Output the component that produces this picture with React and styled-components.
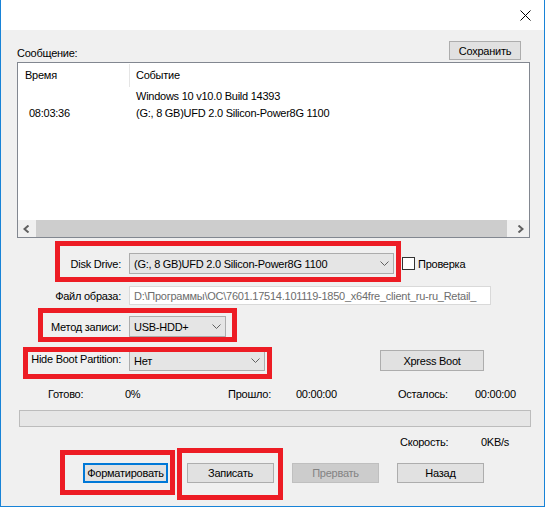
import React from 'react';
import styled, { createGlobalStyle } from 'styled-components';

const GlobalStyle = createGlobalStyle`
  html, body {
    margin: 0;
    padding: 0;
    background: #fff;
  }
  body {
    font-family: "Liberation Sans", Arial, sans-serif;
    font-size: 11px;
    letter-spacing: -0.25px;
    color: #000;
  }
  * {
    box-sizing: border-box;
  }
`;

const Window = styled.div`
  width: 545px;
  height: 507px;
  border: 1px solid #1883d7;
  border-top: none;
  background: #f0f0f0;
  display: flex;
  flex-direction: column;
`;

const TitleBar = styled.div`
  height: 30px;
  background: #fff;
  display: flex;
  justify-content: flex-end;
  align-items: center;
`;

const CloseButton = styled.div`
  width: 37px;
  height: 30px;
  display: flex;
  align-items: center;
  justify-content: center;
`;

const Body = styled.div`
  padding: 11px 0 0 16px;
  display: flex;
  flex-direction: column;
`;

const HeaderRow = styled.div`
  width: 504px;
  height: 19px;
  display: flex;
  justify-content: space-between;
  align-items: flex-end;
`;

const Caption = styled.span`
  line-height: 13px;
`;

const Button = styled.button`
  width: ${(p) => p.w}px;
  height: ${(p) => p.h || 20}px;
  padding: 0;
  font: inherit;
  letter-spacing: inherit;
  color: #000;
  background: #e1e1e1;
  border: ${(p) => (p.primary ? '2px solid #0078d7' : '1px solid #adadad')};
  flex-shrink: 0;
  margin-left: ${(p) => p.ml || 0}px;

  &:disabled {
    background: #cccccc;
    border-color: #bfbfbf;
    color: #838383;
  }
`;

const ListBox = styled.div`
  margin-top: 2px;
  width: 513px;
  height: 176px;
  border: 1px solid #828790;
  background: #fff;
  display: flex;
  flex-direction: column;
`;

const ListLine = styled.div`
  display: grid;
  grid-template-columns: 112px 1fr;
  height: ${(p) => p.h}px;
  line-height: ${(p) => p.h}px;
`;

const HeadCell = styled.div`
  position: relative;
  padding-left: ${(p) => p.pad}px;

  ${(p) =>
    p.divider &&
    `&::after {
      content: '';
      position: absolute;
      right: 0;
      top: 1px;
      bottom: 1px;
      width: 1px;
      background: #e5e5e5;
    }`}
`;

const Cell = styled.div`
  padding-left: ${(p) => p.pad}px;
  white-space: nowrap;
`;

const Filler = styled.div`
  flex: 1;
`;

const HScroll = styled.div`
  height: 17px;
  display: flex;
  background: #f0f0f0;
`;

const ScrollArrow = styled.div`
  width: 17px;
  display: flex;
  align-items: center;
  justify-content: center;
`;

const Thumb = styled.div`
  flex: 1;
  margin: 0 5px 0 1px;
  background: #cdcdcd;
`;

const FieldRow = styled.div`
  position: relative;
  display: flex;
  align-items: center;
  height: ${(p) => p.h}px;
  margin-top: ${(p) => p.mt}px;
`;

const Label = styled.div`
  width: 104px;
  margin-right: 8px;
  text-align: right;
  white-space: nowrap;
  flex-shrink: 0;
  margin-top: ${(p) => p.lift || 0}px;
`;

const Combo = styled.div`
  width: ${(p) => p.w}px;
  height: 21px;
  background: #e5e5e5;
  border: 1px solid #acacac;
  display: flex;
  align-items: center;
  justify-content: space-between;
  padding: 0 4px 0 4px;
  white-space: nowrap;
  flex-shrink: 0;
`;

const TextField = styled.div`
  width: 362px;
  height: 19px;
  background: #fff;
  border: 1px solid #d9d9d9;
  color: #6d6d6d;
  padding-left: 4px;
  display: flex;
  align-items: center;
  white-space: nowrap;
  overflow: hidden;
`;

const CheckBox = styled.div`
  width: 13px;
  height: 13px;
  margin-left: 8px;
  border: 1px solid #333;
  background: #fff;
  flex-shrink: 0;
`;

const CheckLabel = styled.span`
  margin-left: 3px;
`;

const Highlight = styled.div`
  position: absolute;
  left: ${(p) => p.x}px;
  top: ${(p) => p.y}px;
  width: ${(p) => p.w}px;
  height: ${(p) => p.h}px;
  border: 5px solid #ed1c24;
  pointer-events: none;
`;

const InfoRow = styled.div`
  display: flex;
  line-height: 14px;
  margin-top: ${(p) => p.mt}px;
  padding-left: ${(p) => p.pl}px;
  white-space: nowrap;
`;

const Stat = styled.span`
  width: ${(p) => (p.w ? `${p.w}px` : 'auto')};
  flex-shrink: 0;
`;

const Progress = styled.div`
  margin: 9px 0 0 2px;
  width: 512px;
  height: 17px;
  background: #e6e6e6;
  border: 1px solid #bcbcbc;
`;

const ButtonRow = styled.div`
  position: relative;
  display: flex;
  margin-top: 14px;
  padding-left: 66px;
`;

const Chevron = () => (
  <svg width="9" height="5" viewBox="0 0 9 5">
    <path d="M0.5 0.5 L4.5 4.5 L8.5 0.5" fill="none" stroke="#606060" strokeWidth="1" />
  </svg>
);

const Arrow = ({ dir }) => (
  <svg width="7" height="8" viewBox="0 0 7 8">
    <path
      d={dir === 'left' ? 'M5.5 0.5 L1.5 4 L5.5 7.5' : 'M1.5 0.5 L5.5 4 L1.5 7.5'}
      fill="none"
      stroke="#606060"
      strokeWidth="2"
    />
  </svg>
);

const App = () => {
  return (
    <>
      <GlobalStyle />
      <Window>
        <TitleBar>
          <CloseButton>
            <svg width="11" height="11" viewBox="0 0 11 11">
              <path d="M0.5 0.5 L10.5 10.5 M10.5 0.5 L0.5 10.5" stroke="#000" strokeWidth="1" />
            </svg>
          </CloseButton>
        </TitleBar>
        <Body>
          <HeaderRow>
            <Caption>Сообщение:</Caption>
            <Button w={72} h={19}>Сохранить</Button>
          </HeaderRow>

          <ListBox>
            <ListLine h={25}>
              <HeadCell pad={7} divider>Время</HeadCell>
              <HeadCell pad={6}>Событие</HeadCell>
            </ListLine>
            <ListLine h={17}>
              <Cell pad={11}></Cell>
              <Cell pad={6}>Windows 10 v10.0 Build 14393</Cell>
            </ListLine>
            <ListLine h={17}>
              <Cell pad={11}>08:03:36</Cell>
              <Cell pad={6}>(G:, 8 GB)UFD 2.0 Silicon-Power8G 1100</Cell>
            </ListLine>
            <Filler />
            <HScroll>
              <ScrollArrow><Arrow dir="left" /></ScrollArrow>
              <Thumb />
              <ScrollArrow><Arrow dir="right" /></ScrollArrow>
            </HScroll>
          </ListBox>

          <FieldRow h={21} mt={15}>
            <Label>Disk Drive:</Label>
            <Combo w={265}>
              <span>(G:, 8 GB)UFD 2.0 Silicon-Power8G 1100</span>
              <Chevron />
            </Combo>
            <CheckBox />
            <CheckLabel>Проверка</CheckLabel>
            <Highlight x={38} y={-12} w={346} h={41} />
          </FieldRow>

          <FieldRow h={19} mt={12}>
            <Label>Файл образа:</Label>
            <TextField>D:\Программы\ОС\7601.17514.101119-1850_x64fre_client_ru-ru_Retail_</TextField>
          </FieldRow>

          <FieldRow h={21} mt={11}>
            <Label>Метод записи:</Label>
            <Combo w={97}>
              <span>USB-HDD+</span>
              <Chevron />
            </Combo>
            <Highlight x={21} y={-8} w={199} h={34} />
          </FieldRow>

          <FieldRow h={21} mt={13}>
            <Label lift={-3}>Hide Boot Partition:</Label>
            <Combo w={136}>
              <span>Нет</span>
              <Chevron />
            </Combo>
            <Button w={104} h={21} ml={115}>Xpress Boot</Button>
            <Highlight x={6} y={-3} w={249} h={32} />
          </FieldRow>

          <InfoRow mt={16} pl={31}>
            <Stat w={77}>Готово:</Stat>
            <Stat w={103}>0%</Stat>
            <Stat w={68}>Прошло:</Stat>
            <Stat w={102}>00:00:00</Stat>
            <Stat w={77}>Осталось:</Stat>
            <Stat>00:00:00</Stat>
          </InfoRow>

          <Progress />

          <InfoRow mt={8} pl={383}>
            <Stat w={81}>Скорость:</Stat>
            <Stat>0KB/s</Stat>
          </InfoRow>

          <ButtonRow>
            <Button w={85} primary>Форматировать</Button>
            <Button w={87} ml={19}>Записать</Button>
            <Button w={87} ml={18} disabled>Прервать</Button>
            <Button w={87} ml={18}>Назад</Button>
            <Highlight x={43} y={-13} w={115} h={45} />
            <Highlight x={160} y={-15} w={106} h={52} />
          </ButtonRow>
        </Body>
      </Window>
    </>
  );
};

export default App;
